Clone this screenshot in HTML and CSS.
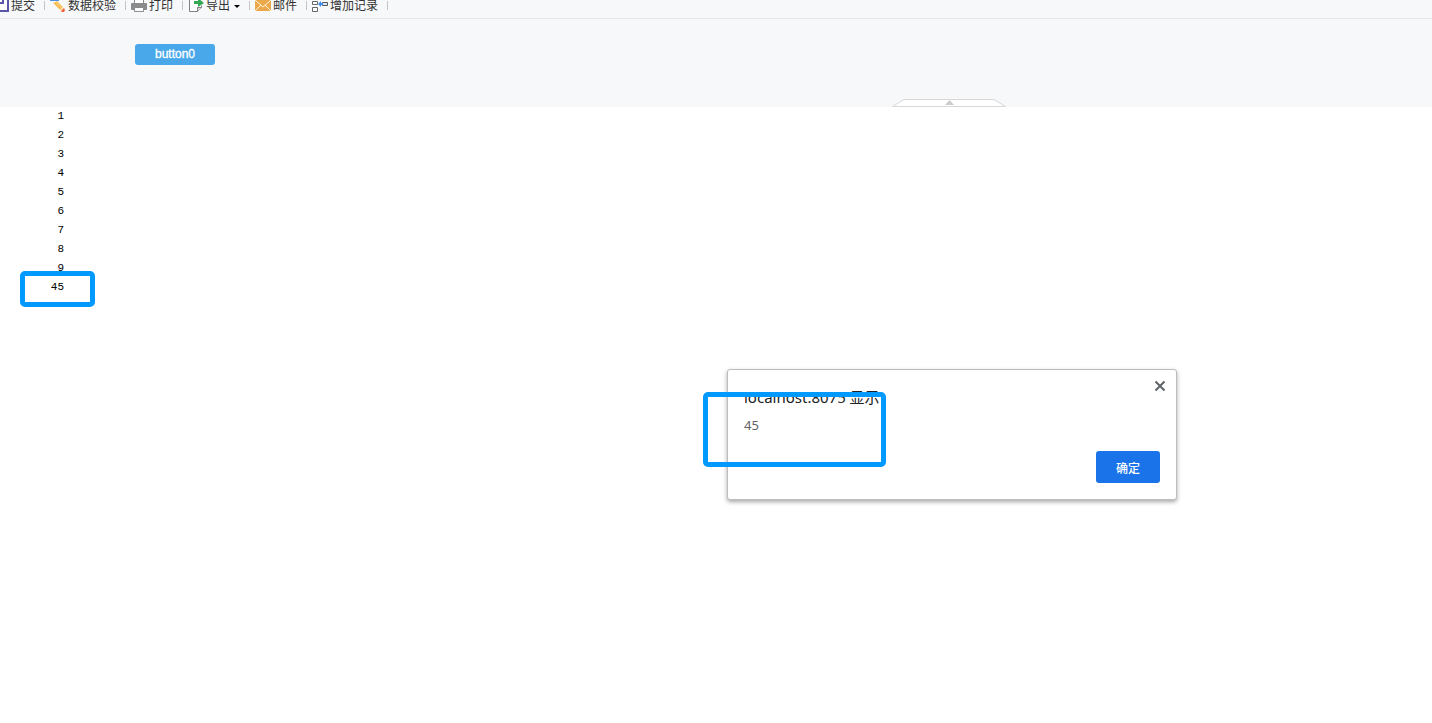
FILE: index.html
```html
<!DOCTYPE html>
<html lang="zh-CN">
<head>
<meta charset="utf-8">
<title>button0</title>
<link rel="stylesheet" href="styles.css">
</head>
<body>
<header class="toolbar">
  <button class="tool" type="button">
    <svg class="icon" viewBox="0 0 16 16"><path d="M1 1h14v14H1z" fill="#fff" stroke="#5b57a6" stroke-width="2"/><path d="M4 1h6v6H4z" fill="#fff" stroke="#5b57a6" stroke-width="2"/></svg>
    <span>提交</span>
  </button>
  <button class="tool" type="button">
    <svg class="icon" viewBox="0 0 16 16"><path d="M0 3h9v2H0z" fill="#4a90e2"/><path d="M3 7l4-2 6 6-3 3z" fill="#fbc765"/><path d="M5 7l6 6" stroke="#f3b04a"/><path d="M10 14l3-3 1 2-3 3z" fill="#fbe3bd"/><path d="M11 15l3-3 1 2-1 2-2 0z" fill="#f0643c"/></svg>
    <span>数据校验</span>
  </button>
  <button class="tool" type="button">
    <svg class="icon" viewBox="0 0 16 16"><path d="M3.500 7V2.500h9V7" fill="#fff" stroke="#8b8b8b"/><rect y="7" width="16" height="7" rx="1" fill="#8b8b8b"/><path d="M3.500 11.500h9v4h-9z" fill="#fff" stroke="#8b8b8b"/></svg>
    <span>打印</span>
  </button>
  <button class="tool" type="button">
    <svg class="icon" viewBox="0 0 16 16"><path d="M13.500 9.500v2l-4 4h-8V1h12v2" fill="#fff" stroke="#808080"/><path d="M9.500 15.500v-4h4" fill="#ddd" stroke="#808080"/><path d="M6 5h4V2l6 5-6 4V8H6z" fill="#35a853"/></svg>
    <span>导出</span>
    <svg class="caret" viewBox="0 0 6 3"><path d="M0 0h6L3 3z" fill="#000"/></svg>
  </button>
  <button class="tool" type="button">
    <svg class="icon" viewBox="0 0 16 16"><rect y="3" width="16" height="12" fill="#eba94b"/><path d="M0 4l8 7 8-7M0 15l6-6M16 15l-6-6" fill="none" stroke="#fff3dc"/></svg>
    <span>邮件</span>
  </button>
  <button class="tool" type="button">
    <svg class="icon" viewBox="0 0 16 16"><path d="M.5 .5h5v3h-5zM.5 5.500h5v3h-5zM.5 11.500h5v4h-5z" fill="#fff" stroke="#666"/><path d="M10.500 6.500h5v3h-5z" fill="#d9e8fb" stroke="#555"/><path d="M6 8l3-3v2h2v2H9v2z" fill="#3c8be8"/></svg>
    <span>增加记录</span>
  </button>
</header>

<section class="params">
  <button class="param-button" type="button">button0</button>
  <button class="collapse" type="button" aria-label="收起">
    <svg viewBox="0 0 114 8"><path d="M.5 7.500L12 .5h90l11.500 7z" fill="#fff" stroke="#d8d8d8"/><path d="M57.500 1L62 6h-9z" fill="#ccc"/></svg>
  </button>
</section>

<main class="report">
  <table class="sheet">
    <tbody>
      <tr><td>1</td></tr>
      <tr><td>2</td></tr>
      <tr><td>3</td></tr>
      <tr><td>4</td></tr>
      <tr><td>5</td></tr>
      <tr><td>6</td></tr>
      <tr><td>7</td></tr>
      <tr><td>8</td></tr>
      <tr><td>9</td></tr>
      <tr><td>45</td></tr>
    </tbody>
  </table>
</main>

<div class="dialog" role="alertdialog" aria-labelledby="dialog-title" aria-describedby="dialog-text">
  <button class="close" type="button" aria-label="关闭">
    <svg viewBox="0 0 12 12"><path d="M1.500 1.500l9 9M10.500 1.500l-9 9" stroke="#5f6368" stroke-width="2"/></svg>
  </button>
  <h1 class="dialog-title" id="dialog-title">localhost:8075 显示</h1>
  <p class="dialog-text" id="dialog-text">45</p>
  <button class="confirm" type="button">确定</button>
</div>

<div class="mark mark-total"></div>
<div class="mark mark-message"></div>
</body>
</html>
```
FILE: styles.css
```css
* {
  box-sizing: border-box;
}

body {
  margin: 0;
  min-height: 100vh;
  overflow: hidden;
  background: #fff;
  font-family: "Liberation Sans", "Noto Sans CJK SC", sans-serif;
  font-size: 12px;
  color: #000;
}

button {
  margin: 0;
  padding: 0;
  border: 0;
  background: none;
  font: inherit;
  color: inherit;
}

.toolbar {
  display: flex;
  align-items: flex-end;
  height: 19px;
  border-bottom: 1px solid #e4e7eb;
  background: #f7f8fa;
}

.tool {
  position: relative;
  display: flex;
  flex: none;
  align-items: center;
  gap: 2px;
  height: 24px;
  padding: 0 10px 0 5px;
  line-height: 16px;
  color: #333;
  white-space: nowrap;
}

.tool:first-child {
  margin-left: -12px;
}

.tool::after {
  content: "";
  position: absolute;
  right: 0;
  top: 7px;
  width: 1px;
  height: 9px;
  background: #c4c4c4;
}

.icon {
  width: 16px;
  height: 16px;
  margin-bottom: 4px;
}

.caret {
  width: 6px;
  height: 3px;
  margin-left: 2px;
}

.params {
  position: relative;
  height: 88px;
  padding: 25px 135px;
  background: #f7f8fa;
}

.param-button {
  display: block;
  width: 80px;
  height: 21px;
  border-radius: 3px;
  background: #48a8ea;
  color: #fff;
  line-height: 21px;
  text-align: center;
  -webkit-text-stroke: 0.3px #fff;
}

.collapse {
  position: absolute;
  left: 892px;
  bottom: 0;
  width: 114px;
  height: 8px;
}

.collapse svg {
  display: block;
}

.sheet {
  width: 64px;
  border-collapse: collapse;
  font-family: "Liberation Mono", monospace;
  font-size: 11px;
  line-height: 19px;
}

.sheet td {
  padding: 0;
  text-align: right;
}

.dialog {
  position: absolute;
  left: 727px;
  top: 369px;
  display: flex;
  flex-direction: column;
  width: 450px;
  padding: 16px;
  border: 1px solid #bdbdbd;
  border-radius: 3px;
  background: #fff;
  box-shadow: 0 2px 4px rgba(0, 0, 0, 0.35);
}

.dialog-title {
  margin: 0;
  font-family: "Noto Sans", "Noto Sans CJK SC", sans-serif;
  font-size: 15px;
  font-weight: 400;
  line-height: 22px;
  color: #202124;
}

.dialog-text {
  margin: 7px 0 16px;
  font-family: "Noto Sans", "Noto Sans CJK SC", sans-serif;
  font-size: 13px;
  line-height: 20px;
  color: #5f6368;
}

.confirm {
  align-self: flex-end;
  width: 64px;
  height: 32px;
  border-radius: 3px;
  background: #1a73e8;
  color: #fff;
  font-weight: 500;
}

.close {
  position: absolute;
  top: 10px;
  right: 10px;
  width: 12px;
  height: 12px;
}

.close svg {
  display: block;
}

.mark {
  position: absolute;
  border: 5px solid #0099ff;
  border-radius: 5px;
  pointer-events: none;
}

.mark-total {
  left: 20px;
  top: 271px;
  width: 75px;
  height: 36px;
}

.mark-message {
  left: 703px;
  top: 392px;
  width: 183px;
  height: 75px;
}
```
